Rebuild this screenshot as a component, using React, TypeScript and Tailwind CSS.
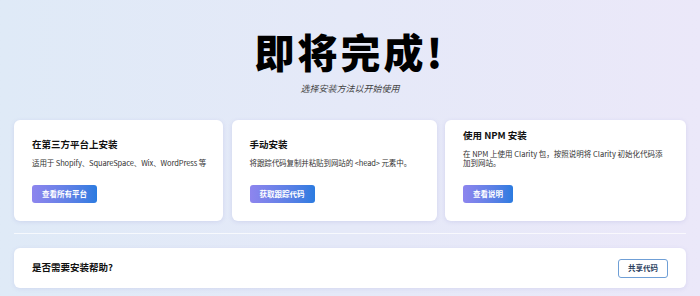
const cards = [
  {
    title: '在第三方平台上安装',
    desc: '适用于 Shopify、SquareSpace、Wix、WordPress 等',
    action: '查看所有平台',
    oneLine: true,
  },
  {
    title: '手动安装',
    desc: '将跟踪代码复制并粘贴到网站的 <head> 元素中。',
    action: '获取跟踪代码',
    oneLine: true,
  },
  {
    title: '使用 NPM 安装',
    desc: '在 NPM 上使用 Clarity 包，按照说明将 Clarity 初始化代码添加到网站。',
    action: '查看说明',
    oneLine: false,
  },
]

export default function App() {
  return (
    <div
      className="h-[296px] w-[700px] overflow-hidden bg-gradient-to-r from-[#dfeaf7] to-[#ebe8f9] px-[14px] text-[#111]"
      style={{ fontFamily: '"Noto Sans CJK SC", "Noto Sans", sans-serif' }}
    >
      <div className="flex flex-col items-center pt-[31px]">
        <h1 className="text-[40px] font-black leading-none tracking-[3px] text-black">即将完成!</h1>
        <p className="mt-[13px] text-[9px] italic leading-none text-[#444]">选择安装方法以开始使用</p>
      </div>

      <div className="mt-[27px] grid grid-cols-[209px_205px_241px] gap-[8.5px]">
        {cards.map(c => (
          <div
            key={c.title}
            className="flex h-[101px] min-w-0 flex-col justify-end rounded-[6px] bg-white px-[18px] pb-[18px] shadow-[0_1px_4px_rgba(120,120,200,0.18)]"
          >
            <h2 className="text-[9.5px] font-bold leading-none">{c.title}</h2>
            <p className={`mt-[9px] text-[7.5px] leading-[9px] text-[#333] ${c.oneLine ? 'whitespace-nowrap tracking-[-0.1px]' : ''}`}>{c.desc}</p>
            <div className="mt-[11px]">
              <button className="h-[18px] rounded-[3px] bg-gradient-to-r from-[#8d85ee] to-[#2a7be0] px-[10px] text-[7.5px] font-bold leading-none text-white">
                {c.action}
              </button>
            </div>
          </div>
        ))}
      </div>

      <div className="mt-[12px] h-px bg-white/70" />

      <div className="mt-[14px] flex h-[40px] items-center justify-between rounded-[6px] bg-white pl-[18px] pr-[18px] shadow-[0_1px_4px_rgba(120,120,200,0.15)]">
        <span className="text-[9.5px] font-bold leading-none">是否需要安装帮助?</span>
        <button className="h-[19px] rounded-[3px] border border-[#6f9fd6] bg-white px-[9px] text-[7.5px] font-bold leading-none text-[#2c3e60]">
          共享代码
        </button>
      </div>
    </div>
  )
}
